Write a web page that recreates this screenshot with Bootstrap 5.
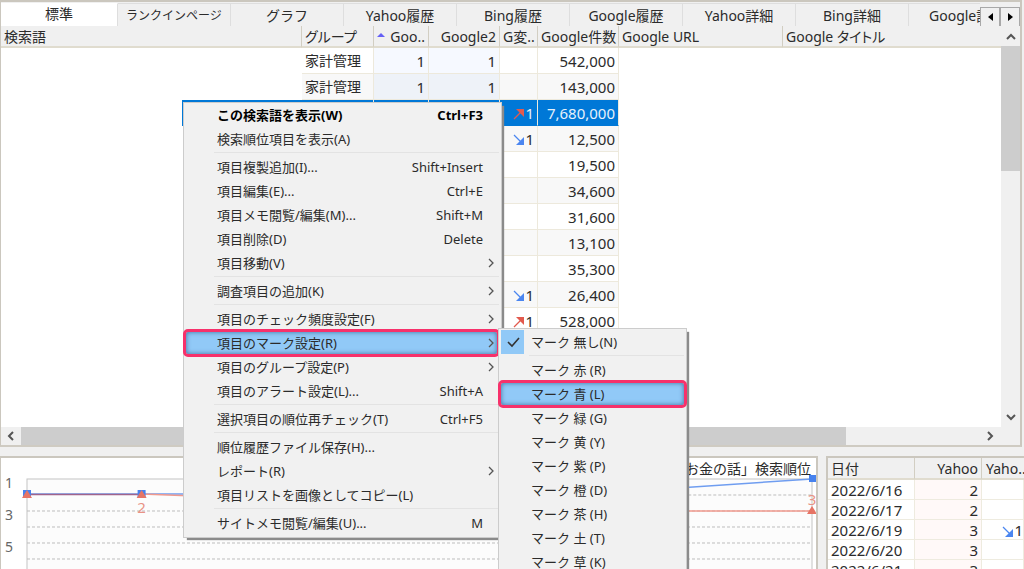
<!DOCTYPE html>
<html lang="ja">
<head>
<meta charset="utf-8">
<meta name="viewport" content="width=device-width, initial-scale=1">
<title>検索順位チェック</title>
<link href="https://cdn.jsdelivr.net/npm/bootstrap@5.3.0/dist/css/bootstrap.min.css" rel="stylesheet">
<style>
  body { font: 14px/20px "Noto Sans", "Noto Sans CJK JP", sans-serif; font-feature-settings: "palt"; color: #2b2b2b; background: #f0f0f0; }
  button, th, td { color: inherit; }
  .pane { border: 2px solid #cbc7be; background: #fff; }
  .result-pane { flex: 59 1 0; border-bottom-color: #cfcbc2; margin-right: 2px; border-left-width: 1px; border-top-width: 2px; }
  .lower { flex: 15 1 0; margin-top: 9px; }
  /* tabs */
  .tab-strip { height: 24px; background: #f0f0f0; border-top: 1px solid #f0f0f0; }
  .tab-strip .tab { flex: 0 0 113px; border: 0; border-right: 1px solid #dedede; border-top: 1px solid #dedede; background: #f0f0f0; padding: 1px 0 0; line-height: 20px; white-space: nowrap; }
  .tab-strip .tab.active { flex-basis: 117px; background: #fff; border-top-color: #fff; padding: 0 0 3px; }
  .tab-strip .tab.long { font-size: 12px; }
  .tab-strip .tab:last-child { flex: 1 0 60px; padding-left: 20px; text-align: left; border-right: 0; }
  .tab-scroll button { width: 20px; height: 20px; border: 1px solid #a8a8a8; background: #f0f0f0; padding: 0; }
  /* grids */
  .sheet { table-layout: fixed; width: 100%; border-collapse: separate; border-spacing: 0; white-space: nowrap; }
  .sheet th { height: 22px; padding: 2px 3px 0; font-weight: 400; line-height: 18px; background: #f0f0f0; border-bottom: 2px solid #e0dccf; border-right: 1px solid #d2cec2; overflow: hidden; }
  .sheet th:last-child { border-right: 0; }
  .sheet td { padding: 0 3px; overflow: hidden; }
  .result td { height: 26px; line-height: 22px; }
  .result td.v { border-right: 1px solid #ede9dc; border-bottom: 1px solid #ede9dc; }
  .result tr:nth-child(even) td.v { background: #f8f8f8; }
  .result tr td.rank.v { background: #f6f9ff; }
  .result tr:nth-child(even) td.rank.v { background: #eef2f8; }
  .result tr.picked td.v, .result tr.picked td.rank.v { background: #0078d7; color: #e6f1fb; border-bottom-color: #0078d7; }
  .result tr.picked td:first-child { background: linear-gradient(90deg, #fff 181px, #0078d7 181px); }
  .num { font-size: 15px; text-align: right; }
  .bar-v { width: 19px; background: #f0f0f0; }
  .bar-v .track, .bar-h .track { background: #cdcdcd; }
  .bar-h { height: 18px; background: #f0f0f0; }
  .scroll-btn { width: 20px; height: 18px; border: 0; padding: 0; background: #f0f0f0; display: flex; align-items: center; justify-content: center; flex: none; }
  .bar-v .scroll-btn { height: 20px; }
  /* lower panes */
  .chart-pane { flex: 1 1 0; border-left-width: 1px; border-bottom: 0; }
  .history-pane { flex: 0 0 198px; margin-left: 8px; border-right: 0; border-bottom: 0; }
  .history td { height: 20px; font-size: 15px; line-height: 18px; border-bottom: 1px solid #eeebdf; border-right: 1px solid #eeebdf; }
  .history td:nth-child(2) { background: #fff9f8; }
  .chart-title { height: 23px; line-height: 21px; padding-right: 5px; text-align: right; font-feature-settings: normal; }
  .axis { width: 26px; padding: 0 0 0 4px; font-size: 14px; color: #666; }
  .axis div { height: 32px; line-height: 8px; }
  /* menus */
  .popup { border: 1px solid #ccc; background: #f1f1f1; box-shadow: 3px 3px 1px -1px #8b8b8b; font-size: 13px; }
  .popup-main { left: 183px; top: 102px; width: 319px; padding: 0 2px 2px; }
  .popup-sub { left: 498px; top: 328px; width: 189px; padding: 1px 2px; }
  .popup hr { margin: 1px 0 2px 28px; border-color: #bbb; }
  .entry { display: flex; align-items: center; width: 100%; height: 24px; padding: 0 16px 0 31px; border: 0; background: none; text-align: left; white-space: nowrap; line-height: 22px; }
  .entry kbd { margin-left: auto; padding: 0; color: inherit; background: none; font: inherit; }
  .entry svg { margin: 0 -12px 0 auto; }
  .popup-sub .entry { padding: 0; }
  .tick { width: 23px; height: 24px; margin-right: 7px; display: flex; align-items: center; justify-content: center; }
  .tick.on { background: #91c9f7; }
  .tick svg { margin: 0; }
  .ring { width: calc(100% - 2px); background: #91c9f7; outline: 3px solid #f7316b; border-radius: 2px; box-shadow: inset 0 0 5px #3d6f9c; height: 22px; margin: 1px 0; }
  .popup-main .ring { padding-right: 14px; }
  .popup-sub .ring { width: 100%; }
</style>
</head>
<body class="vh-100 d-flex flex-column overflow-hidden">
<svg class="d-none">
  <symbol id="up" viewBox="0 0 12 12"><path d="M1 11 8 4" stroke="#e25a4e" stroke-width="1.3"/><path d="M3 1h8v8z" fill="#e25a4e"/></symbol>
  <symbol id="down" viewBox="0 0 12 12"><path d="M1 1 8 8" stroke="#4b86f0" stroke-width="1.3"/><path d="M11 3v8H3z" fill="#4b86f0"/></symbol>
  <symbol id="more" viewBox="0 0 8 10"><path d="M2 1l4 4-4 4" fill="none" stroke="#555" stroke-width="1.3"/></symbol>
</svg>

<section class="pane result-pane d-flex flex-column overflow-hidden">
  <div class="tab-strip d-flex">
    <nav class="d-flex flex-grow-1 overflow-hidden">
      <button class="tab active">標準</button><button class="tab long">ランクインページ</button><button class="tab">グラフ</button><button class="tab">Yahoo履歴</button><button class="tab">Bing履歴</button><button class="tab">Google履歴</button><button class="tab">Yahoo詳細</button><button class="tab">Bing詳細</button><button class="tab">Google詳細</button>
    </nav>
    <div class="tab-scroll d-flex pt-1 flex-shrink-0">
      <button class="d-flex align-items-center justify-content-center" aria-label="前のタブ"><svg width="5" height="8"><path d="M5 0v8L0 4z"/></svg></button>
      <button class="d-flex align-items-center justify-content-center" aria-label="次のタブ"><svg width="5" height="8"><path d="M0 0v8l5-4z"/></svg></button>
    </div>
  </div>
  <div class="d-flex flex-grow-1 overflow-hidden">
    <div class="flex-grow-1 overflow-hidden">
      <table class="sheet result">
        <colgroup><col style="width:301px"><col style="width:72px"><col style="width:55px"><col style="width:71px"><col style="width:38px"><col style="width:81px"><col style="width:164px"><col></colgroup>
        <thead><tr><th>検索語</th><th>グループ</th><th class="text-end"><svg class="float-start mt-1" width="8" height="9"><path d="M0 5l4-4 4 4z" fill="#6560f5"/></svg>Goo..</th><th class="text-end">Google2</th><th>G変..</th><th class="text-end">Google件数</th><th>Google URL</th><th>Google タイトル</th></tr></thead>
        <tbody>
          <tr><td></td><td class="v">家計管理</td><td class="v rank num">1</td><td class="v rank num">1</td><td class="v num"></td><td class="v num">542,000</td><td></td><td></td></tr>
          <tr><td></td><td class="v">家計管理</td><td class="v rank num">1</td><td class="v rank num">1</td><td class="v num"></td><td class="v num">143,000</td><td></td><td></td></tr>
          <tr class="picked"><td></td><td class="v"></td><td class="v rank num"></td><td class="v rank num"></td><td class="v num"><svg width="12" height="12"><use href="#up"/></svg>1</td><td class="v num">7,680,000</td><td></td><td></td></tr>
          <tr><td></td><td class="v"></td><td class="v rank num"></td><td class="v rank num"></td><td class="v num"><svg width="12" height="12"><use href="#down"/></svg>1</td><td class="v num">12,500</td><td></td><td></td></tr>
          <tr><td></td><td class="v"></td><td class="v rank num"></td><td class="v rank num"></td><td class="v num"></td><td class="v num">19,500</td><td></td><td></td></tr>
          <tr><td></td><td class="v"></td><td class="v rank num"></td><td class="v rank num"></td><td class="v num"></td><td class="v num">34,600</td><td></td><td></td></tr>
          <tr><td></td><td class="v"></td><td class="v rank num"></td><td class="v rank num"></td><td class="v num"></td><td class="v num">31,600</td><td></td><td></td></tr>
          <tr><td></td><td class="v"></td><td class="v rank num"></td><td class="v rank num"></td><td class="v num"></td><td class="v num">13,100</td><td></td><td></td></tr>
          <tr><td></td><td class="v"></td><td class="v rank num"></td><td class="v rank num"></td><td class="v num"></td><td class="v num">35,300</td><td></td><td></td></tr>
          <tr><td></td><td class="v"></td><td class="v rank num"></td><td class="v rank num"></td><td class="v num"><svg width="12" height="12"><use href="#down"/></svg>1</td><td class="v num">26,400</td><td></td><td></td></tr>
          <tr><td></td><td class="v"></td><td class="v rank num"></td><td class="v rank num"></td><td class="v num"><svg width="12" height="12"><use href="#up"/></svg>1</td><td class="v num">528,000</td><td></td><td></td></tr>
        </tbody>
      </table>
    </div>
    <div class="bar-v d-flex flex-column">
      <button class="scroll-btn" aria-label="上へ"><svg width="10" height="7"><path d="M1 6l4-4 4 4" fill="none" stroke="#555" stroke-width="2"/></svg></button>
      <div class="flex-grow-1"><div class="track h-100" style="max-height:34.5%"></div></div>
      <button class="scroll-btn" aria-label="下へ"><svg width="10" height="7"><path d="M1 1l4 4 4-4" fill="none" stroke="#555" stroke-width="2"/></svg></button>
    </div>
  </div>
  <div class="bar-h d-flex pe-3">
    <button class="scroll-btn" aria-label="左へ"><svg width="8" height="10"><path d="M6 1L2 5l4 4" fill="none" stroke="#555" stroke-width="2"/></svg></button>
    <div class="flex-grow-1"><div class="track h-100" style="width:86%"></div></div>
    <button class="scroll-btn me-1" aria-label="右へ"><svg width="8" height="10"><path d="M2 1l4 4-4 4" fill="none" stroke="#555" stroke-width="2"/></svg></button>
  </div>
</section>

<div class="lower d-flex overflow-hidden">
  <section class="pane chart-pane d-flex flex-column overflow-hidden">
    <div class="chart-title">育 お金の話」検索順位</div>
    <div class="d-flex flex-grow-1">
      <div class="axis"><div>1</div><div>3</div><div>5</div></div>
      <svg class="flex-grow-1 overflow-visible me-1" height="100" font-size="15">
        <rect width="100%" height="120" fill="#fcfcfc" stroke="#c4c4c4"/>
        <g stroke="#bdbdbd" stroke-dasharray="3 2"><line y1="32" y2="32" x2="100%"/><line y1="48" y2="48" x2="100%"/><line y1="64" y2="64" x2="100%"/><line y1="80" y2="80" x2="100%"/><line x1="71.5%" y1="16" y2="16" x2="100%"/></g>
        <g stroke="#6f9df0" stroke-width="1.5"><line y1="15" y2="15" x2="71.5%"/><line x1="71.5%" y1="15" x2="100%" y2="0"/></g>
        <g stroke="#f09a8e" stroke-width="1.5"><line x1="14.6%" y1="15" x2="28%" y2="19"/><line x1="28%" y1="19" x2="57%" y2="32"/><line x1="57%" y1="32" x2="100%" y2="32"/></g>
        <line y1="15.5" y2="15.5" x2="14.6%" stroke="#a0648c" stroke-width="1.5"/>
        <svg x="0" class="overflow-visible"><path d="M-4 11h8v8h-8z" fill="#4782ee"/><path d="M0 11l5 8H-5z" fill="#e67465"/></svg>
        <svg x="14.6%" class="overflow-visible"><path d="M-4 11h8v8h-8z" fill="#4782ee"/><path d="M0 11l5 8H-5z" fill="#e67465"/><text y="34" text-anchor="middle" fill="#e99386">2</text></svg>
        <svg x="100%" class="overflow-visible"><path d="M-3-4h7v7h-7z" fill="#4782ee"/><path d="M0 27l5 8H-5z" fill="#e67465"/><text y="26" text-anchor="middle" fill="#e99386">3</text></svg>
      </svg>
    </div>
  </section>
  <section class="pane history-pane overflow-hidden">
    <table class="sheet history">
      <colgroup><col style="width:87px"><col style="width:67px"><col></colgroup>
      <thead><tr><th>日付</th><th class="text-end">Yahoo</th><th class="ps-1 pe-0">Yaho..</th></tr></thead>
      <tbody>
        <tr><td>2022/6/16</td><td class="num">2</td><td></td></tr>
        <tr><td>2022/6/17</td><td class="num">2</td><td></td></tr>
        <tr><td>2022/6/19</td><td class="num">3</td><td class="text-end pe-0"><svg width="12" height="12"><use href="#down"/></svg>1</td></tr>
        <tr><td>2022/6/20</td><td class="num">3</td><td></td></tr>
        <tr><td>2022/6/21</td><td class="num">3</td><td></td></tr>
      </tbody>
    </table>
  </section>
</div>

<div class="popup popup-main position-absolute" role="menu">
  <button class="entry fw-bold text-black">この検索語を表示(W)<kbd>Ctrl+F3</kbd></button>
  <button class="entry">検索順位項目を表示(A)</button>
  <hr>
  <button class="entry">項目複製追加(I)...<kbd>Shift+Insert</kbd></button>
  <button class="entry">項目編集(E)...<kbd>Ctrl+E</kbd></button>
  <button class="entry">項目メモ閲覧/編集(M)...<kbd>Shift+M</kbd></button>
  <button class="entry">項目削除(D)<kbd>Delete</kbd></button>
  <button class="entry">項目移動(V)<svg width="8" height="10"><use href="#more"/></svg></button>
  <hr>
  <button class="entry">調査項目の追加(K)<svg width="8" height="10"><use href="#more"/></svg></button>
  <hr>
  <button class="entry">項目のチェック頻度設定(F)<svg width="8" height="10"><use href="#more"/></svg></button>
  <button class="entry ring">項目のマーク設定(R)<svg width="8" height="10"><use href="#more"/></svg></button>
  <button class="entry">項目のグループ設定(P)<svg width="8" height="10"><use href="#more"/></svg></button>
  <button class="entry">項目のアラート設定(L)...<kbd>Shift+A</kbd></button>
  <hr>
  <button class="entry">選択項目の順位再チェック(T)<kbd>Ctrl+F5</kbd></button>
  <hr>
  <button class="entry">順位履歴ファイル保存(H)...</button>
  <button class="entry">レポート(R)<svg width="8" height="10"><use href="#more"/></svg></button>
  <button class="entry">項目リストを画像としてコピー(L)</button>
  <hr>
  <button class="entry">サイトメモ閲覧/編集(U)...<kbd>M</kbd></button>
</div>

<div class="popup popup-sub position-absolute" role="menu">
  <button class="entry"><span class="tick on"><svg width="14" height="12"><path d="M2 6l4 4 7-8" fill="none" stroke="#333" stroke-width="1.6"/></svg></span>マーク 無し(N)</button>
  <hr>
  <button class="entry"><span class="tick"></span>マーク 赤 (R)</button>
  <button class="entry ring"><span class="tick"></span>マーク 青 (L)</button>
  <button class="entry"><span class="tick"></span>マーク 緑 (G)</button>
  <button class="entry"><span class="tick"></span>マーク 黄 (Y)</button>
  <button class="entry"><span class="tick"></span>マーク 紫 (P)</button>
  <button class="entry"><span class="tick"></span>マーク 橙 (D)</button>
  <button class="entry"><span class="tick"></span>マーク 茶 (H)</button>
  <button class="entry"><span class="tick"></span>マーク 土 (T)</button>
  <button class="entry"><span class="tick"></span>マーク 草 (K)</button>
</div>
<script src="https://cdn.jsdelivr.net/npm/bootstrap@5.3.0/dist/js/bootstrap.bundle.min.js"></script>
</body>
</html>
